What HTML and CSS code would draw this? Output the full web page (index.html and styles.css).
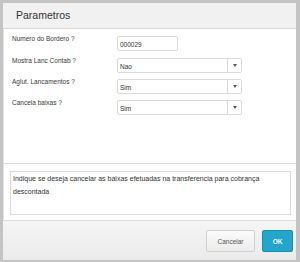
FILE: index.html
```html
<!DOCTYPE html>
<html lang="pt">
<head>
    <meta charset="UTF-8">
    <title>Parametros</title>
    <link rel="stylesheet" href="styles.css">
</head>
<body>
    <div class="dialog">
        <div class="header">Parametros</div>

        <div class="content">
            <div class="row first">
                <label>Numero do Bordero ?</label>
                <div class="field text">000029</div>
            </div>
            <div class="row">
                <label>Mostra Lanc Contab ?</label>
                <div class="field combo"><span>Nao</span><i class="arrow"></i></div>
            </div>
            <div class="row">
                <label>Aglut. Lancamentos ?</label>
                <div class="field combo"><span>Sim</span><i class="arrow"></i></div>
            </div>
            <div class="row">
                <label>Cancela baixas ?</label>
                <div class="field combo"><span>Sim</span><i class="arrow"></i></div>
            </div>
        </div>

        <div class="help">
            <div class="help-box">Indique se deseja cancelar as baixas efetuadas na transferencia para cobrança descontada</div>
        </div>

        <div class="footer">
            <button class="btn">Cancelar</button>
            <button class="btn primary">OK</button>
        </div>
    </div>
</body>
</html>
```

FILE: styles.css
```css
* {
    margin: 0;
    padding: 0;
    box-sizing: border-box;
}

body {
    font-family: 'Liberation Sans', Arial, sans-serif;
    background: #ffffff;
    color: #333333;
}

.dialog {
    width: 300px;
    height: 262px;
    border-style: solid;
    border-color: #c4c4c4;
    border-width: 3px 4px 2px 3px;
    display: flex;
    flex-direction: column;
    background: #ffffff;
}

.header {
    height: 26px;
    flex: none;
    background: #f1f1f1;
    border-bottom: 1px solid #d8d8d8;
    padding-left: 13px;
    font-size: 10.5px;
    line-height: 25px;
    color: #333333;
}

.content {
    height: 135px;
    flex: none;
    border-left: 1px solid #e2e2e2;
    border-bottom: 1px solid #dedede;
    padding: 7px 0 0 8px;
    display: flex;
    flex-direction: column;
    gap: 6px;
}

.row {
    display: grid;
    grid-template-columns: 105px auto;
    align-items: start;
}

.row.first {
    padding-bottom: 1px;
}

.row label {
    font-size: 6.5px;
    line-height: 8px;
    margin-top: -1px;
    color: #3a3a3a;
}

.field {
    height: 15px;
    border: 1px solid #dadada;
    border-radius: 2px;
    font-size: 6.5px;
    line-height: 8px;
    padding: 4px 0 0 2px;
    color: #333333;
    background: #ffffff;
}

.field.text {
    width: 61px;
}

.field.combo {
    width: 125px;
    display: flex;
    justify-content: space-between;
    padding-right: 0;
    padding-top: 0;
    align-items: stretch;
}

.field.combo span {
    padding-top: 4px;
}

.arrow {
    width: 14px;
    border-left: 1px solid #dadada;
    margin-top: -1px;
    margin-bottom: -1px;
    display: flex;
    align-items: center;
    justify-content: center;
}

.arrow::after {
    content: "";
    border-left: 2.5px solid transparent;
    border-right: 2.5px solid transparent;
    border-top: 3px solid #5a5a5a;
}

.help {
    height: 56px;
    flex: none;
    border-left: 1px solid #e2e2e2;
    padding: 7px 5px 5px 6px;
}

.help-box {
    height: 44px;
    border: 1px solid #dcdcdc;
    padding: 1px 2px;
    font-size: 7px;
    line-height: 12.5px;
    color: #333333;
}

.footer {
    flex: 1;
    border-top: 1px solid #dcdcdc;
    background: linear-gradient(#f5f5f5, #ebebeb);
    display: flex;
    justify-content: flex-end;
    align-items: flex-start;
    padding: 9px 3px 0 0;
    gap: 7px;
}

.btn {
    height: 22px;
    width: 49px;
    border: 1px solid #d0d0d0;
    border-radius: 2px;
    background: linear-gradient(#fbfbfb, #ececec);
    color: #555555;
    font-family: 'Liberation Sans', Arial, sans-serif;
    font-size: 6.5px;
}

.btn.primary {
    width: 31px;
    background: #22a6cb;
    border-color: #168fb3;
    color: #ffffff;
    font-weight: bold;
}
```
